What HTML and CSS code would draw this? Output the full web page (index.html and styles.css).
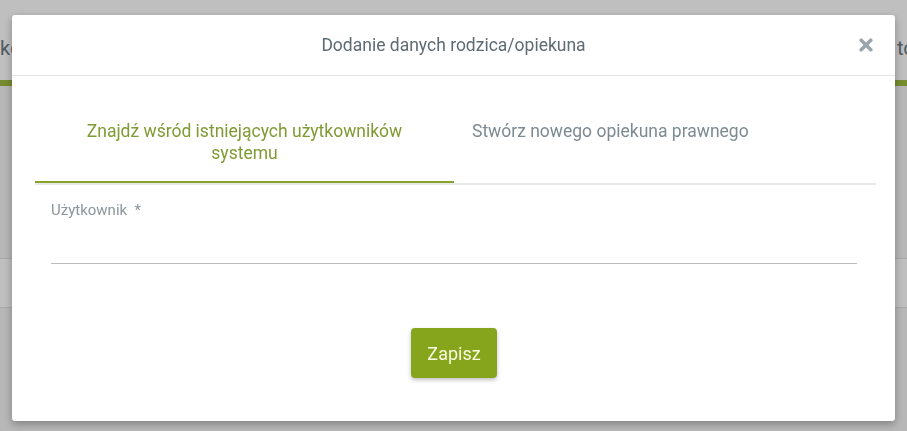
FILE: index.html
```html
<!DOCTYPE html>
<html lang="pl">
<head>
  <meta charset="UTF-8">
  <meta name="viewport" content="width=device-width, initial-scale=1.0">
  <title>Dodanie danych rodzica/opiekuna</title>
  <link rel="stylesheet" href="styles.css">
</head>
<body>
  <header class="topbar">
    <nav class="nav">
      <span class="nav-item">kontakty</span>
      <span class="nav-item nav-last">to</span>
    </nav>
  </header>
  <main class="page">
    <div class="page-card">
      <div class="page-row"></div>
    </div>
  </main>

  <div class="overlay">
    <div class="modal">
      <div class="modal-header">
        <span></span>
        <h2 class="modal-title">Dodanie danych rodzica/opiekuna</h2>
        <button class="modal-close" type="button" aria-label="Zamknij">
          <svg width="14" height="14" viewBox="0 0 14 14">
            <path d="M2.2 2.2 L11.8 11.8 M11.8 2.2 L2.2 11.8" stroke="#9aa6ad" stroke-width="3.6" stroke-linecap="round"/>
          </svg>
        </button>
      </div>
      <div class="modal-body">
        <div class="tabs">
          <div class="tab active">Znajdź wśród istniejących użytkowników systemu</div>
          <div class="tab">Stwórz nowego opiekuna prawnego</div>
        </div>
        <form class="form">
          <label class="field">
            <span class="field-label">Użytkownik&nbsp;&nbsp;*</span>
            <input class="field-input" type="text">
          </label>
          <div class="actions">
            <button class="btn-save" type="button">Zapisz</button>
          </div>
        </form>
      </div>
    </div>
  </div>
</body>
</html>
```

FILE: styles.css
```css
* { box-sizing: border-box; }
html, body {
  margin: 0;
  height: 100%;
}
body {
  font-family: Roboto, "Liberation Sans", sans-serif;
  background: #f4f4f4;
  overflow: hidden;
}
.topbar {
  background: #fff;
  height: 86px;
  border-bottom: 6px solid #9fbb3f;
}
.nav {
  display: flex;
  justify-content: space-between;
  padding-top: 36px;
  font-size: 20px;
  color: #6c7a82;
}
.nav-item {
  white-space: nowrap;
}
.nav-last {
  width: 10px;
  overflow: hidden;
}
.page {
  padding: 20px 0 0;
}
.page-card {
  background: #fff;
  margin-top: 152px;
}
.page-row {
  height: 50px;
  border-top: 1px solid #e2e2e2;
  border-bottom: 1px solid #e2e2e2;
}

/* modal */
.overlay {
  position: fixed;
  inset: 0;
  background: rgba(0, 0, 0, .25);
  display: flex;
  justify-content: center;
  align-items: flex-start;
  padding-top: 15px;
}
.modal {
  width: 883px;
  background: #fff;
  border-radius: 3px;
  box-shadow: 0 3px 8px rgba(0, 0, 0, .3);
}
.modal-header {
  height: 61px;
  border-bottom: 1px solid #e3e3e3;
  display: grid;
  grid-template-columns: 1fr auto 1fr;
  align-items: center;
}
.modal-title {
  margin: 0;
  font-size: 17.5px;
  font-weight: 400;
  color: #5e6b73;
  padding-bottom: 1px;
}
.modal-close {
  justify-self: end;
  margin-right: 22px;
  padding: 0;
  border: 0;
  background: none;
  width: 14px;
  height: 14px;
  cursor: pointer;
  display: flex;
}
.modal-body {
  padding: 0 19px 43px 23px;
}
.tabs {
  display: flex;
  align-items: flex-start;
  border-bottom: 2px solid #e8e8e8;
}
.tab {
  padding: 44px 18px 17px;
  font-size: 17.5px;
  line-height: 22px;
  color: #7d8a92;
  border-bottom: 2px solid transparent;
}
.tab.active {
  flex: 0 0 419px;
  text-align: center;
  color: #7f9b33;
  border-bottom-color: #88a22e;
}
.form {
  padding: 16px 19px 0 16px;
}
.field {
  display: flex;
  flex-direction: column;
}
.field-label {
  font-size: 15px;
  color: #8a959b;
  line-height: 18px;
}
.field-input {
  border: 0;
  border-bottom: 1px solid #bcbcbc;
  height: 45px;
  font: inherit;
  outline: none;
}
.actions {
  display: flex;
  justify-content: center;
  padding-top: 64px;
}
.btn-save {
  height: 50px;
  padding: 0 16px;
  border: 0;
  border-radius: 4px;
  background: #86a51c;
  color: #f8fbdf;
  font-family: Roboto, "Liberation Sans", sans-serif;
  font-size: 18px;
  box-shadow: 0 2px 4px rgba(0, 0, 0, .25);
  cursor: pointer;
}
```
